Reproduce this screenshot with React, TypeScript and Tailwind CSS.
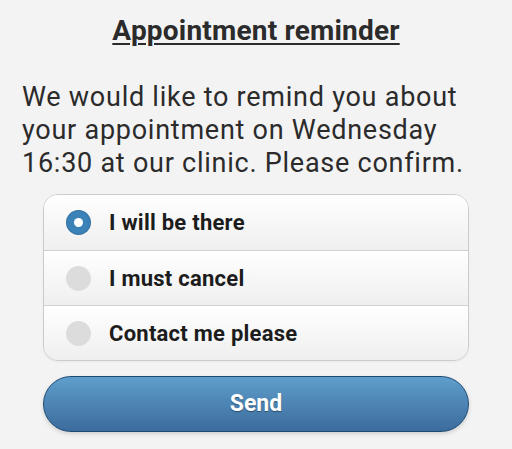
import React, { useState } from 'react';

const options = ['I will be there', 'I must cancel', 'Contact me please'];

const Radio: React.FC<{ checked: boolean }> = ({ checked }) =>
  checked ? (
    <span className="flex h-[25px] w-[25px] items-center justify-center rounded-full bg-[#3b82b9] shadow-[inset_0_0_2px_rgba(0,0,0,0.3)]">
      <span className="h-[9px] w-[9px] rounded-full bg-white" />
    </span>
  ) : (
    <span className="h-[25px] w-[25px] rounded-full bg-[#dcdcdc]" />
  );

export default function App() {
  const [choice, setChoice] = useState(0);

  return (
    <div className="min-h-[449px] w-[512px] bg-[#f3f3f3] font-['Roboto',sans-serif] text-[#2b2b2b]">
      <h1 className="pt-[14px] text-center text-[28px] font-bold leading-[34px] tracking-[0.2px] text-[#2b2b2b] underline underline-offset-[3px] decoration-[2px]">
        Appointment reminder
      </h1>
      <p className="mt-[33px] px-[22px] text-[27px] leading-[33px] tracking-[0.75px]">
        We would like to remind you about your appointment on Wednesday 16:30 at our clinic. Please confirm.
      </p>
      <div className="mx-[43px] mt-[14px] overflow-hidden rounded-[15px] border border-[#cccccc] shadow-[0_1px_2px_rgba(0,0,0,0.05)]">
        {options.map((label, i) => (
          <button
            key={label}
            onClick={() => setChoice(i)}
            className={`flex h-[55px] w-full items-center gap-[18px] bg-gradient-to-b from-[#ffffff] to-[#efefef] pl-[22px] text-left ${
              i > 0 ? 'border-t border-[#d0d0d0]' : 'h-[54px]'
            }`}
          >
            <Radio checked={choice === i} />
            <span className="text-[22px] font-bold tracking-[0.25px] text-[#1c1c1c]">{label}</span>
          </button>
        ))}
      </div>
      <div className="px-[43px] pt-[15px]">
        <button className="h-[56px] w-full rounded-full border border-[#1d4a73] bg-gradient-to-b from-[#5f9ecb] to-[#3b6c9d] text-[23px] font-bold text-white shadow-[0_2px_4px_rgba(0,0,0,0.15)] [text-shadow:0_1px_1px_rgba(0,0,0,0.4)]">
          Send
        </button>
      </div>
    </div>
  );
}
